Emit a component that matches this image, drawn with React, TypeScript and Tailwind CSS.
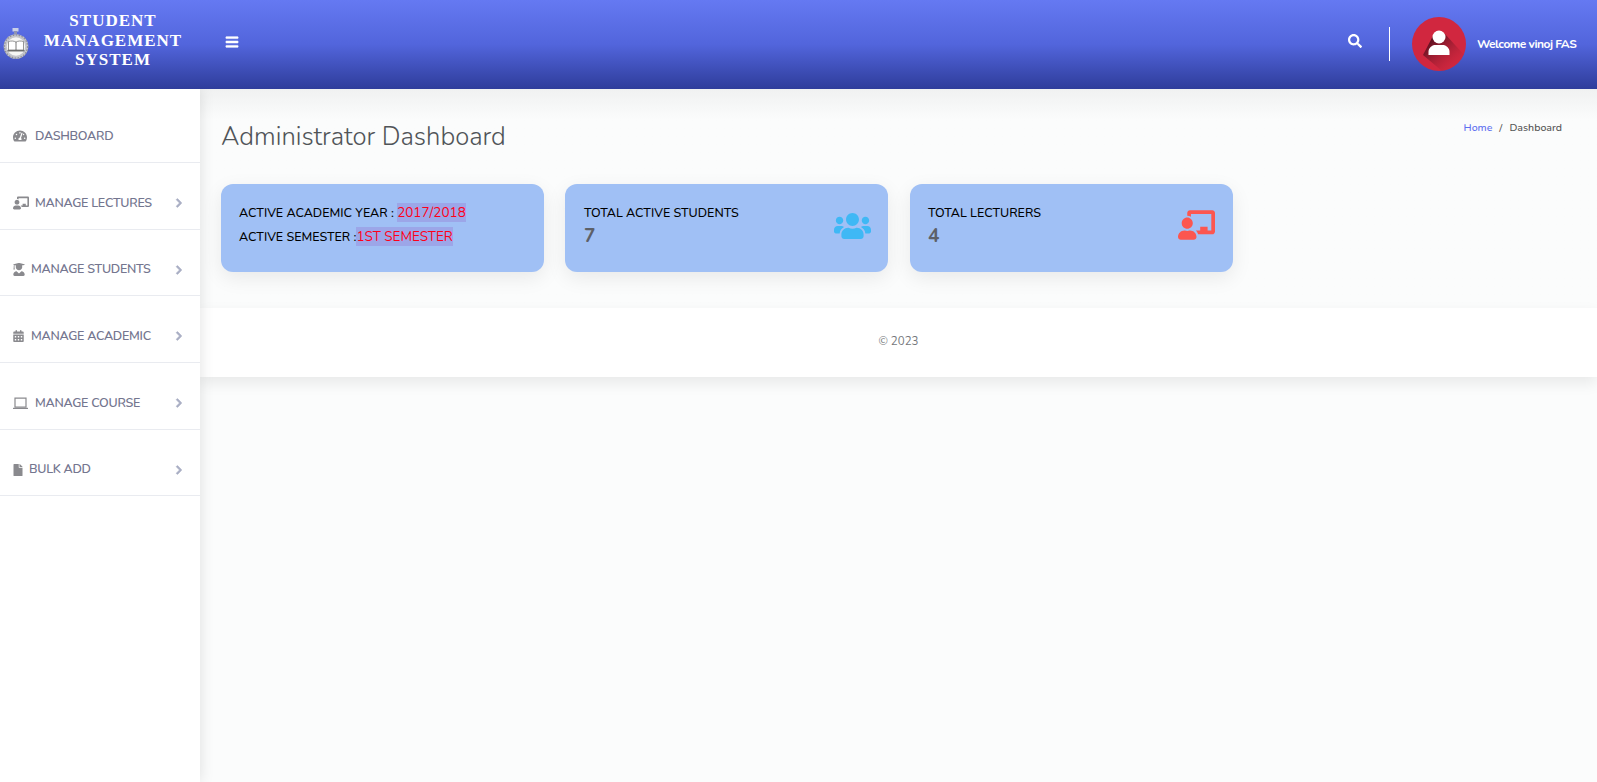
import React from "react";
import { FaSearch, FaBars, FaChalkboardTeacher, FaUserGraduate, FaFile, FaUsers, FaChevronRight, FaTachometerAlt } from "react-icons/fa";
import { FaCalendarDays } from "react-icons/fa6";

const font = "font-['Nunito','Lato','Noto_Sans',sans-serif]";

function Seal() {
  return (
    <svg width="26" height="33" viewBox="0 0 26 33" className="shrink-0">
      <rect x="9.5" y="0" width="6" height="3.5" fill="#c9d0e8" />
      <rect x="11" y="3" width="3" height="3" fill="#8d93b5" />
      <circle cx="13" cy="18.5" r="12.3" fill="#c4c5cb" />
      <circle cx="13" cy="18.5" r="11.6" fill="none" stroke="#8e8f97" strokeWidth="1.4" strokeDasharray="1.5 1.5" />
      <circle cx="13" cy="18.5" r="9.2" fill="#f6f6f4" />
      <path d="M5.5 13.5c3-.8 5.5-.6 7.5.6 2-1.2 4.5-1.4 7.5-.6v8.5H5.5z" fill="#fff" stroke="#6a6a6a" strokeWidth="0.7" />
      <path d="M13 14v8" stroke="#555" strokeWidth="0.8" />
      <path d="M4.5 22.8h17" stroke="#555" strokeWidth="1.2" />
    </svg>
  );
}

function Laptop() {
  return (
    <svg width="15" height="13" viewBox="0 0 15 13" className="shrink-0">
      <path d="M2 1.2h11v9H2z" fill="none" stroke="#8a8a8e" strokeWidth="1.2" />
      <path d="M0 10.8h15v1.2H0z" fill="#8a8a8e" />
    </svg>
  );
}

function Avatar() {
  return (
    <div className="relative w-[54px] h-[54px] rounded-full bg-[#d1273f] overflow-hidden shrink-0">
      <svg width="54" height="54" viewBox="0 0 54 54" className="absolute left-0 top-0">
        <defs>
          <linearGradient id="ls" x1="0.1" y1="0.1" x2="0.9" y2="0.9">
            <stop offset="0" stopColor="#3d0c18" stopOpacity="0.95" />
            <stop offset="1" stopColor="#d1273f" stopOpacity="0" />
          </linearGradient>
        </defs>
        <path d="M11 38 L22 17 L33 17 L54 40 L54 54 L30 54 Z" fill="url(#ls)" />
        <circle cx="27" cy="20" r="6.5" fill="#fff" />
        <path d="M16.5 38 v-3 c0-4 3-6.5 6-7 h9 c3 .5 6 3 6 7 v3 z" fill="#fff" />
      </svg>
    </div>
  );
}

type Item = { label: string; icon: React.ReactNode; gap: string; arrow?: boolean; h: string };

const items: Item[] = [
  { label: "DASHBOARD", icon: <FaTachometerAlt className="w-[14px] h-[14px]" />, gap: "gap-[8px]", h: "h-[74px] pt-[21px]" },
  { label: "MANAGE LECTURES", icon: <FaChalkboardTeacher className="w-[16px] h-[14px]" />, gap: "gap-[6px]", arrow: true, h: "h-[67px] pt-[14px]" },
  { label: "MANAGE STUDENTS", icon: <FaUserGraduate className="w-[12px] h-[13px]" />, gap: "gap-[6px]", arrow: true, h: "h-[66px] pt-[14px]" },
  { label: "MANAGE ACADEMIC", icon: <FaCalendarDays className="w-[11px] h-[12px]" />, gap: "gap-[7px]", arrow: true, h: "h-[67px] pt-[14px]" },
  { label: "MANAGE COURSE", icon: <Laptop />, gap: "gap-[7px]", arrow: true, h: "h-[67px] pt-[14px]" },
  { label: "BULK ADD", icon: <FaFile className="w-[10px] h-[12px]" />, gap: "gap-[6px]", arrow: true, h: "h-[66px] pt-[14px]" },
];

function Card({ children, extra }: { children: React.ReactNode; extra?: string }) {
  return (
    <div className={`w-[323px] h-[88px] rounded-[12px] bg-[#a0c0f5] shadow-[0_6px_20px_rgba(0,0,0,0.08)] px-[18px] flex justify-between text-black ${extra ?? ""}`}>
      {children}
    </div>
  );
}

export default function App() {
  return (
    <div className={`${font} h-[782px] w-[1597px] overflow-hidden flex flex-col bg-[#fbfcfc]`}>
      <header className="relative z-20 h-[89px] shrink-0 flex items-center bg-gradient-to-b from-[#6579f2] via-[#5265dc] to-[#2f3d9b] text-white">
        <div className="w-[200px] flex items-center pl-[3px]">
          <Seal />
          <div className="w-[140px] ml-[14px] text-center font-['Liberation_Serif',serif] font-bold text-[17px] leading-[19.5px] tracking-[1px] -mt-[8px]">
            STUDENT<br />MANAGEMENT<br />SYSTEM
          </div>
        </div>
        <FaBars className="ml-[25px] w-[14px] h-[14px] -mt-[6px] stroke-white stroke-[20]" />
        <div className="ml-auto flex items-center -mt-[1px]">
          <FaSearch className="w-[14px] h-[14px] -mt-[7px]" />
          <div className="w-px h-[34px] bg-white ml-[27px] mr-[22px]" />
          <Avatar />
          <div className="ml-[11px] mr-[21px] w-[99px] whitespace-nowrap text-[12px] font-bold tracking-[-0.5px]">Welcome vinoj FAS</div>
        </div>
      </header>

      <div className="flex flex-1 min-h-0">
        <aside className="relative z-10 w-[200px] shrink-0 bg-white shadow-[0_0_14px_rgba(0,0,0,0.12)]">
          {items.map((it) => (
            <div key={it.label} className={`${it.h} border-b border-[#e9ebf0] flex items-center pl-[13px] pr-[17px] ${it.gap} text-[#8a8a8e]`}>
              <span className="w-auto shrink-0 flex">{it.icon}</span>
              <span className="text-[12.5px] font-semibold tracking-[-0.27px] text-[#74768f] whitespace-nowrap">{it.label}</span>
              {it.arrow && <FaChevronRight className="ml-auto w-[8px] h-[10px] text-[#a9aec4] stroke-[#a9aec4] stroke-[40]" />}
            </div>
          ))}
        </aside>

        <main className="flex-1 min-w-0 flex flex-col">
          <div className="h-[219px] px-[21px] shrink-0 bg-gradient-to-b from-[#f0f1f1] to-[#fbfcfc] to-[14%]">
            <div className="flex justify-between">
              <h1 className="mt-[32px] text-[25.6px] leading-[32px] text-[#505458] font-light">Administrator Dashboard</h1>
              <div className="mt-[32px] mr-[14px] text-[10.6px] font-medium leading-[14px]">
                <span className="text-[#5d6ff0]">Home</span>
                <span className="text-[#555] mx-[7px]">/</span>
                <span className="text-[#555]">Dashboard</span>
              </div>
            </div>
            <div className="mt-[31px] flex gap-[21px]">
              <Card>
                <div className="pt-[17px] text-[12.5px] font-medium leading-[23.5px]">
                  <div>ACTIVE ACADEMIC YEAR : <span className="text-[#ff0018] text-[13.5px] font-normal bg-[#9ca6e8] inline-block leading-[19px]">2017/2018</span></div>
                  <div>ACTIVE SEMESTER :<span className="text-[#ff0018] text-[13.5px] font-normal bg-[#9ca6e8] inline-block leading-[19px]">1ST SEMESTER</span></div>
                </div>
              </Card>
              <Card>
                <div className="pt-[19px] ml-[1px]">
                  <div className="text-[12.5px] font-medium leading-[19px]">TOTAL ACTIVE STUDENTS</div>
                  <div className="text-[19px] leading-[26px] mt-[1px] text-[#5d6068] font-bold">7</div>
                </div>
                <FaUsers className="mt-[27px] -mr-[1px] w-[37px] h-[30px] text-[#3fb8f5]" />
              </Card>
              <Card extra="ml-[1px]">
                <div className="pt-[19px]">
                  <div className="text-[12.5px] font-medium leading-[19px]">TOTAL LECTURERS</div>
                  <div className="text-[19px] leading-[26px] mt-[1px] text-[#5d6068] font-bold">4</div>
                </div>
                <FaChalkboardTeacher className="mt-[26px] w-[37px] h-[30px] text-[#fc5650]" />
              </Card>
            </div>
          </div>
          <footer className="h-[69px] shrink-0 bg-white shadow-[0_6px_14px_rgba(0,0,0,0.08)] flex items-center justify-center pb-[2px] text-[11.5px] text-[#74777b]">
            © 2023
          </footer>
        </main>
      </div>
    </div>
  );
}
